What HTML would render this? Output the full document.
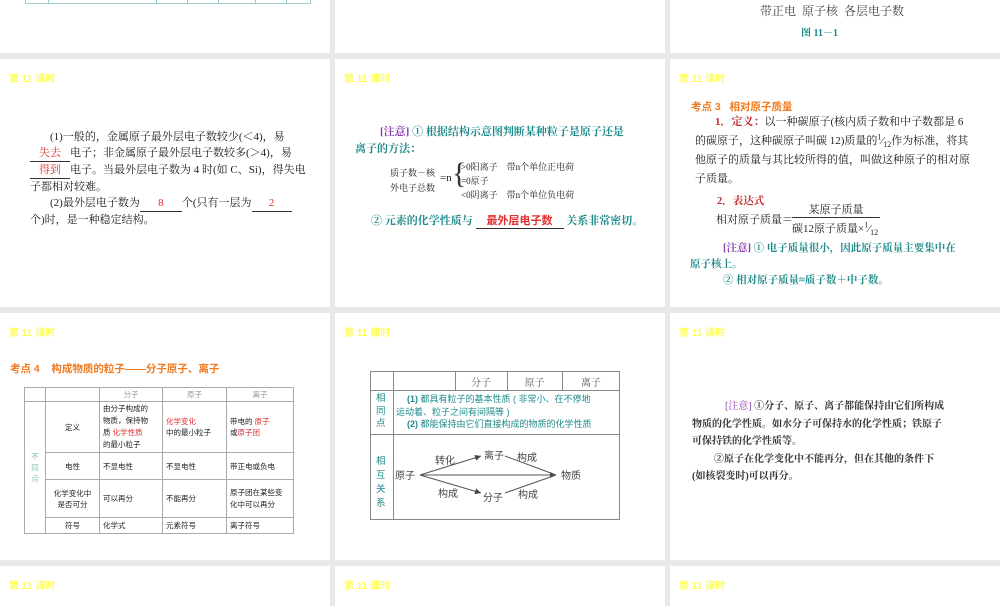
<!DOCTYPE html>
<html><head><meta charset="utf-8"><style>
*{margin:0;padding:0;box-sizing:border-box}
body{width:1000px;height:600px;background:#e9e9e9;position:relative;overflow:hidden;font-family:"Liberation Serif","Noto Serif CJK SC","Noto Sans CJK SC",serif;color:#222}
.s{position:absolute;background:#fff;overflow:hidden}
.lab{position:absolute;left:9px;top:11px;font:bold 10px "Liberation Sans","Noto Sans CJK SC",sans-serif;color:#ffff55}
.a{position:absolute;white-space:nowrap}
.r{color:#e03030}
.t{color:#1f8a8a}
.p{color:#8a3fb0}
.o{color:#f07a20;font-family:"Liberation Sans","Noto Sans CJK SC",sans-serif;font-weight:bold}
.u{display:inline-block;border-bottom:1px solid #333;text-align:center}
sup,sub{line-height:0;font-size:8px}
table{border-collapse:collapse;table-layout:fixed}
td{border:1px solid #aaa;word-break:break-all;overflow:hidden}
</style></head><body>
<!-- row1 -->
<div class="s" style="left:0;top:0;width:330px;height:53px">
 <div class="a" style="left:25px;top:-10px;width:286px;height:14px;border:1px solid #9cc;border-top:none"></div>
 <div class="a" style="left:48px;top:0;height:4px;border-left:1px solid #9cc"></div>
 <div class="a" style="left:156px;top:0;height:4px;border-left:1px solid #9cc"></div>
 <div class="a" style="left:187px;top:0;height:4px;border-left:1px solid #9cc"></div>
 <div class="a" style="left:218px;top:0;height:4px;border-left:1px solid #9cc"></div>
 <div class="a" style="left:255px;top:0;height:4px;border-left:1px solid #9cc"></div>
 <div class="a" style="left:286px;top:0;height:4px;border-left:1px solid #9cc"></div>
</div>
<div class="s" style="left:335px;top:0;width:330px;height:53px"></div>
<div class="s" style="left:670px;top:0;width:330px;height:53px">
 <div class="a" style="left:90px;top:2px;font-size:12px;color:#444">带正电&nbsp;&nbsp;原子核&nbsp;&nbsp;各层电子数</div>
 <div class="a t" style="left:131px;top:24px;font-size:10px;font-weight:bold">图 11－1</div>
</div>
<!-- row2 -->
<div class="s" style="left:0;top:59px;width:330px;height:248px">
 <div class="lab">第 11 课时</div>
 <div class="a" style="left:30px;top:70px;font-size:11px;line-height:16px">
 <span style="padding-left:20px"></span>(1)一般的，金属原子最外层电子数较少(＜4)，易<br>
 <span class="u r" style="width:40px">失去</span>电子；非金属原子最外层电子数较多(＞4)，易<br>
 <span class="u r" style="width:40px">得到</span>电子。当最外层电子数为 4 时(如 C、Si)，得失电<br>子都相对较难。<br>
 <span style="padding-left:20px"></span>(2)最外层电子数为<span class="u r" style="width:42px">8</span>个(只有一层为<span class="u r" style="width:40px">2</span><br>个)时，是一种稳定结构。
 </div>
</div>
<div class="s" style="left:335px;top:59px;width:330px;height:248px">
 <div class="lab">第 11 课时</div>
 <div class="a t" style="left:20px;top:65px;font-size:11px;line-height:17px;font-weight:bold"><span style="padding-left:25px"></span><span class="p">[注意]</span> ① 根据结构示意图判断某种粒子是原子还是<br>离子的方法：</div>
 <div class="a" style="left:55px;top:107px;font-size:9px;line-height:15px">质子数－核<br>外电子总数</div>
 <div class="a" style="left:105px;top:113px;font-size:11px">=n</div>
 <div class="a" style="left:117px;top:98px;font-size:30px;line-height:34px;font-weight:100;color:#333">{</div>
 <div class="a" style="left:126px;top:101px;font-size:9px;line-height:14px">&gt;0阳离子&nbsp;&nbsp;&nbsp;&nbsp;带n个单位正电荷<br>=0原子<br>&lt;0阴离子&nbsp;&nbsp;&nbsp;&nbsp;带n个单位负电荷</div>
 <div class="a t" style="left:36px;top:153px;font-size:11px;font-weight:bold">② 元素的化学性质与 <span class="u r" style="width:88px;font-family:'Liberation Sans','Noto Sans CJK SC',sans-serif">最外层电子数</span> 关系非常密切。</div>
</div>
<div class="s" style="left:670px;top:59px;width:330px;height:248px">
 <div class="lab">第 11 课时</div>
 <div class="a o" style="left:21px;top:40px;font-size:10.5px">考点 3&nbsp;&nbsp;&nbsp;相对原子质量</div>
 <div class="a" style="left:25px;top:54px;font-size:11px;line-height:19px"><span style="padding-left:20px"></span><b style="color:#c03030">1．定义：</b>以一种碳原子(核内质子数和中子数都是 6<br>的碳原子，这种碳原子叫碳 12)质量的<sup>1</sup>⁄<sub>12</sub>作为标准，将其<br>他原子的质量与其比较所得的值，叫做这种原子的相对原<br>子质量。</div>
 <div class="a" style="left:47px;top:134px;font-size:10.5px;color:#c03030;font-weight:bold">2．表达式</div>
 <div class="a" style="left:46px;top:152px;font-size:11px">相对原子质量＝</div>
 <div class="a" style="left:122px;top:142px;width:88px;text-align:center;border-bottom:1px solid #333;font-size:11px">某原子质量</div>
 <div class="a" style="left:122px;top:161px;font-size:11px">碳12原子质量×<sup>1</sup>⁄<sub>12</sub></div>
 <div class="a t" style="left:20px;top:182px;font-size:10.5px;line-height:16px;font-weight:bold"><span style="padding-left:33px"></span><span class="p">[注意]</span> ① 电子质量很小，因此原子质量主要集中在<br>原子核上。<br><span style="padding-left:33px"></span>② 相对原子质量≈质子数＋中子数。</div>
</div>
<!-- row3 -->
<div class="s" style="left:0;top:313px;width:330px;height:247px">
 <div class="lab">第 11 课时</div>
 <div class="a o" style="left:10px;top:48px;font-size:10.5px">考点 4&nbsp;&nbsp;&nbsp;&nbsp;构成物质的粒子——分子原子、离子</div>
 <table class="a" style="left:24px;top:74px;font-size:7.5px;width:269px;font-family:'Liberation Sans','Noto Sans CJK SC',sans-serif">
  <colgroup><col style="width:21px"><col style="width:54px"><col style="width:63px"><col style="width:64px"><col style="width:67px"></colgroup>
  <tr style="height:14px;color:#999;text-align:center"><td></td><td></td><td>分子</td><td>原子</td><td>离子</td></tr>
  <tr style="height:51px"><td rowspan="4" style="color:#8bb;text-align:center">不<br>同<br>点</td><td style="text-align:center">定义</td><td style="line-height:12px;padding-left:3px">由分子构成的<br>物质，保持物<br>质 <span class="r">化学性质</span><br>的最小粒子</td><td style="padding-left:3px"><span class="r">化学变化</span><br>中的最小粒子</td><td style="padding-left:3px">带电的 <span class="r">原子</span><br>或<span class="r">原子团</span></td></tr>
  <tr style="height:27px"><td style="text-align:center">电性</td><td style="padding-left:3px">不显电性</td><td style="padding-left:3px">不显电性</td><td style="padding-left:3px">带正电或负电</td></tr>
  <tr style="height:38px"><td style="text-align:center">化学变化中<br>是否可分</td><td style="padding-left:3px">可以再分</td><td style="padding-left:3px">不能再分</td><td style="padding-left:3px;line-height:12px">原子团在某些变<br>化中可以再分</td></tr>
  <tr style="height:16px"><td style="text-align:center">符号</td><td style="padding-left:3px">化学式</td><td style="padding-left:3px">元素符号</td><td style="padding-left:3px">离子符号</td></tr>
 </table>
</div>
<div class="s" style="left:335px;top:313px;width:330px;height:247px">
 <div class="lab">第 11 课时</div>
 <div class="a" style="left:35px;top:58px;width:250px;height:149px;border:1px solid #888"></div>
 <div class="a" style="left:35px;top:77px;width:250px;border-top:1px solid #888"></div>
 <div class="a" style="left:35px;top:121px;width:250px;border-top:1px solid #888"></div>
 <div class="a" style="left:58px;top:58px;height:149px;border-left:1px solid #888"></div>
 <div class="a" style="left:120px;top:58px;height:19px;border-left:1px solid #888"></div>
 <div class="a" style="left:172px;top:58px;height:19px;border-left:1px solid #888"></div>
 <div class="a" style="left:227px;top:58px;height:19px;border-left:1px solid #888"></div>
 <div class="a" style="left:120px;top:61px;width:52px;text-align:center;font-size:10px;color:#555">分子</div>
 <div class="a" style="left:172px;top:61px;width:55px;text-align:center;font-size:10px;color:#555">原子</div>
 <div class="a" style="left:227px;top:61px;width:58px;text-align:center;font-size:10px;color:#555">离子</div>
 <div class="a t" style="left:41px;top:80px;font-size:9.5px;line-height:12.5px;font-family:'Liberation Sans','Noto Sans CJK SC',sans-serif">相<br>同<br>点</div>
 <div class="a t" style="left:61px;top:80px;font-size:9px;line-height:12.5px;font-family:'Liberation Sans','Noto Sans CJK SC',sans-serif"><span style="padding-left:11px"></span><b>(1)</b> 都具有粒子的基本性质 ( 非常小、在不停地<br>运动着、粒子之间有间隔等 )<br><span style="padding-left:11px"></span><b>(2)</b> 都能保持由它们直接构成的物质的化学性质</div>
 <div class="a t" style="left:41px;top:142px;font-size:9.5px;line-height:14px;font-family:'Liberation Sans','Noto Sans CJK SC',sans-serif">相<br>互<br>关<br>系</div>
 <svg class="a" style="left:58px;top:122px" width="227" height="85">
  <defs><marker id="m" markerWidth="6" markerHeight="6" refX="6" refY="3" orient="auto"><path d="M0,0L6,3L0,6z" fill="#444"/></marker></defs>
  <g stroke="#555" stroke-width="1" fill="none">
   <line x1="27" y1="40" x2="88" y2="21" marker-end="url(#m)"/>
   <line x1="27" y1="40" x2="88" y2="58" marker-end="url(#m)"/>
   <line x1="27" y1="40" x2="163" y2="40" marker-end="url(#m)"/>
   <line x1="112" y1="21" x2="163" y2="40"/>
   <line x1="112" y1="58" x2="163" y2="40"/>
  </g>
  <g font-size="10" fill="#444" font-family="Liberation Sans,Noto Sans CJK SC,sans-serif">
   <text x="2" y="44">原子</text><text x="42" y="29">转化</text><text x="91" y="24">离子</text><text x="124" y="26">构成</text>
   <text x="168" y="44">物质</text><text x="45" y="62">构成</text><text x="90" y="66">分子</text><text x="125" y="63">构成</text>
  </g>
 </svg>
</div>
<div class="s" style="left:670px;top:313px;width:330px;height:247px">
 <div class="lab">第 11 课时</div>
 <div class="a" style="left:22px;top:85px;font-size:10px;line-height:17.5px;font-weight:bold;color:#333"><span style="padding-left:33px"></span><span class="p" style="font-weight:normal">[注意]</span> ①分子、原子、离子都能保持由它们所构成<br>物质的化学性质。如水分子可保持水的化学性质；铁原子<br>可保持铁的化学性质等。<br><span style="padding-left:22px"></span>②原子在化学变化中不能再分，但在其他的条件下<br>(如核裂变时)可以再分。</div>
</div>
<!-- row4 -->
<div class="s" style="left:0;top:566px;width:330px;height:40px"><div class="lab">第 11 课时</div></div>
<div class="s" style="left:335px;top:566px;width:330px;height:40px"><div class="lab">第 11 课时</div></div>
<div class="s" style="left:670px;top:566px;width:330px;height:40px"><div class="lab">第 11 课时</div></div>
</body></html>
